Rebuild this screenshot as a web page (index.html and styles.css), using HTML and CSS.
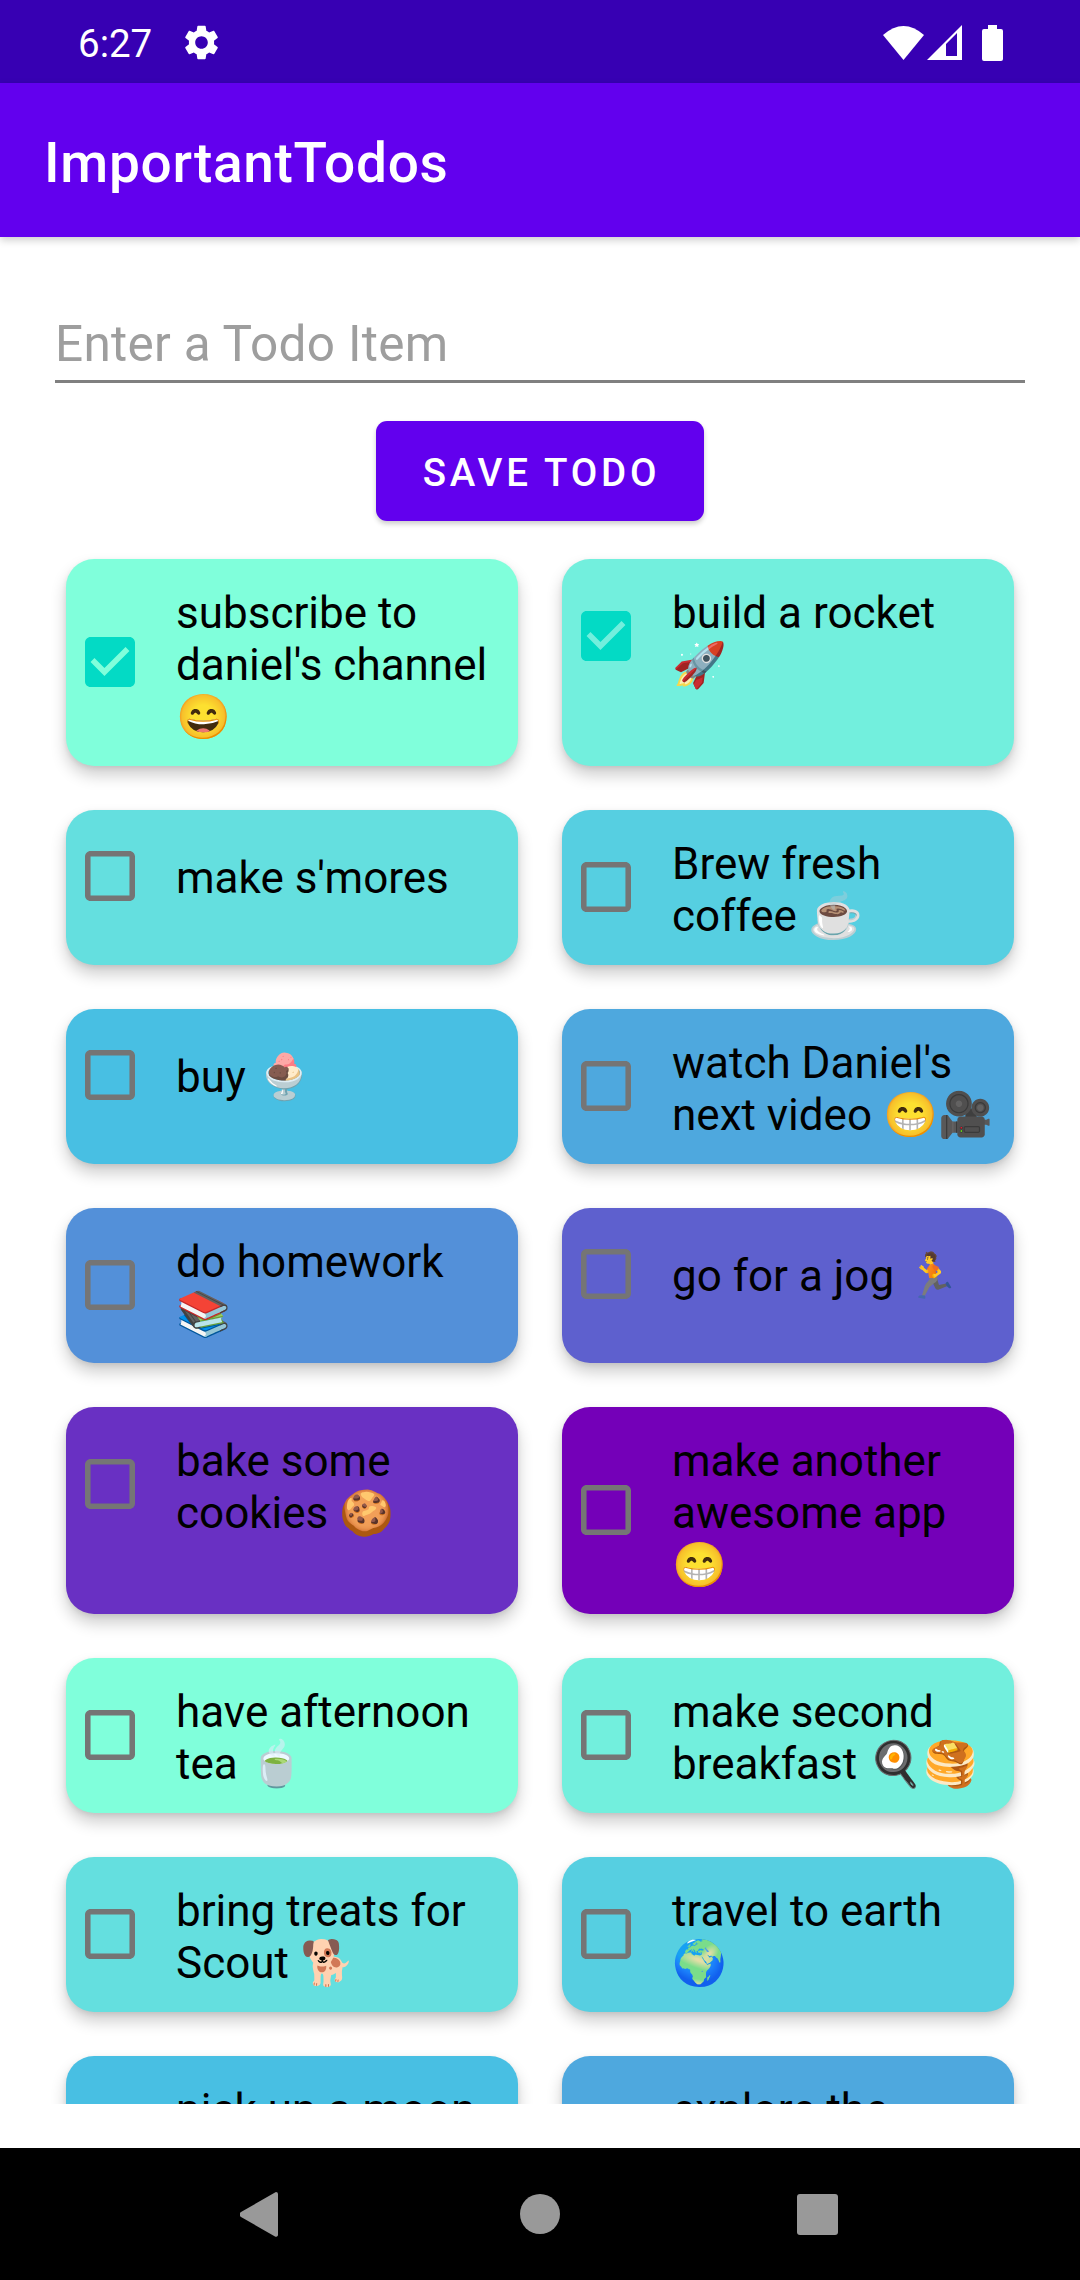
FILE: index.html
```html
<!DOCTYPE html>
<html>
<head>
    <title>ImportantTodos</title>
    <link rel="stylesheet" href="styles.css">
</head>
<body>
    <svg class="sprites">
        <symbol id="box-empty" viewBox="0 0 18 18">
            <path d="M16 0H2C.9 0 0 .9 0 2v14c0 1.1.9 2 2 2h14c1.1 0 2-.9 2-2V2c0-1.1-.9-2-2-2zm0 16H2V2h14v14z"/>
        </symbol>
        <symbol id="box-checked" viewBox="0 0 18 18">
            <path d="M16 0H2C.9 0 0 .9 0 2v14c0 1.1.9 2 2 2h14c1.1 0 2-.9 2-2V2c0-1.1-.9-2-2-2zM7 14 2 9l1.41-1.41L7 11.17l7.59-7.59L16 5l-9 9z"/>
        </symbol>
    </svg>

    <div class="status-bar">
        <span class="clock">6:27</span>
        <svg class="gear" viewBox="2.65 2 18.7 20">
            <path d="M19.14 12.94c.04-.3.06-.61.06-.94 0-.32-.02-.64-.07-.94l2.03-1.58c.18-.14.23-.41.12-.61l-1.92-3.32c-.12-.22-.37-.29-.59-.22l-2.39.96c-.5-.38-1.03-.7-1.62-.94l-.36-2.54c-.04-.24-.24-.41-.48-.41h-3.84c-.24 0-.43.17-.47.41l-.36 2.54c-.59.24-1.13.57-1.62.94l-2.39-.96c-.22-.08-.47 0-.59.22L2.74 8.87c-.12.21-.08.47.12.61l2.03 1.58c-.05.3-.09.63-.09.94s.02.64.07.94l-2.03 1.58c-.18.14-.23.41-.12.61l1.92 3.32c.12.22.37.29.59.22l2.39-.96c.5.38 1.03.7 1.62.94l.36 2.54c.05.24.24.41.48.41h3.84c.24 0 .44-.17.47-.41l.36-2.54c.59-.24 1.13-.56 1.62-.94l2.39.96c.22.08.47 0 .59-.22l1.92-3.32c.12-.22.07-.47-.12-.61l-2.01-1.58zM12 15.6c-1.98 0-3.6-1.62-3.6-3.6s1.62-3.6 3.6-3.6 3.6 1.62 3.6 3.6-1.62 3.6-3.6 3.6z"/>
        </svg>
        <div class="status-icons">
            <svg class="wifi" viewBox="0 0 41 34"><path d="M20.5 34 0 9Q20.5-9 41 9z"/></svg>
            <svg class="signal" viewBox="0 0 35 35"><path fill-rule="evenodd" d="M35 0 0 35h35zM30 8 19 19v12h11z"/></svg>
            <svg class="battery" viewBox="0 0 21 36"><path d="M6 0h9v4h4a2 2 0 0 1 2 2v28a2 2 0 0 1-2 2H2a2 2 0 0 1-2-2V6a2 2 0 0 1 2-2h4z"/></svg>
        </div>
    </div>

    <div class="app-bar">ImportantTodos</div>

    <div class="content">
        <input class="todo-input" type="text" placeholder="Enter a Todo Item">
        <button class="save-button">SAVE TODO</button>

        <div class="todo-list">
            <div class="todo-card">
                <svg class="box box-three is-checked"><use href="#box-checked"/></svg>
                <div class="todo-text">subscribe to daniel's channel 😄</div>
            </div>
            <div class="todo-card">
                <svg class="box box-two is-checked"><use href="#box-checked"/></svg>
                <div class="todo-text">build a rocket 🚀</div>
            </div>
            <div class="todo-card">
                <svg class="box box-one"><use href="#box-empty"/></svg>
                <div class="todo-text one-line">make s'mores</div>
            </div>
            <div class="todo-card">
                <svg class="box box-two"><use href="#box-empty"/></svg>
                <div class="todo-text">Brew fresh coffee ☕</div>
            </div>
            <div class="todo-card">
                <svg class="box box-one"><use href="#box-empty"/></svg>
                <div class="todo-text one-line">buy 🍨</div>
            </div>
            <div class="todo-card">
                <svg class="box box-two"><use href="#box-empty"/></svg>
                <div class="todo-text">watch Daniel's next video 😁🎥</div>
            </div>
            <div class="todo-card">
                <svg class="box box-two"><use href="#box-empty"/></svg>
                <div class="todo-text">do homework 📚</div>
            </div>
            <div class="todo-card">
                <svg class="box box-one"><use href="#box-empty"/></svg>
                <div class="todo-text one-line">go for a jog 🏃</div>
            </div>
            <div class="todo-card">
                <svg class="box box-two"><use href="#box-empty"/></svg>
                <div class="todo-text">bake some cookies 🍪</div>
            </div>
            <div class="todo-card">
                <svg class="box box-three"><use href="#box-empty"/></svg>
                <div class="todo-text">make another awesome app 😁</div>
            </div>
            <div class="todo-card">
                <svg class="box box-two"><use href="#box-empty"/></svg>
                <div class="todo-text">have afternoon tea 🍵</div>
            </div>
            <div class="todo-card">
                <svg class="box box-two"><use href="#box-empty"/></svg>
                <div class="todo-text">make second breakfast 🍳🥞</div>
            </div>
            <div class="todo-card">
                <svg class="box box-two"><use href="#box-empty"/></svg>
                <div class="todo-text">bring treats for Scout 🐕</div>
            </div>
            <div class="todo-card">
                <svg class="box box-two"><use href="#box-empty"/></svg>
                <div class="todo-text">travel to earth 🌍</div>
            </div>
            <div class="todo-card">
                <svg class="box box-two"><use href="#box-empty"/></svg>
                <div class="todo-text">pick up a moon</div>
            </div>
            <div class="todo-card">
                <svg class="box box-two"><use href="#box-empty"/></svg>
                <div class="todo-text">explore the</div>
            </div>
        </div>
    </div>

    <div class="nav-bar">
        <svg class="nav-back" viewBox="0 0 38 45"><path d="M36 0a2 2 0 0 1 2 2v41a2 2 0 0 1-3 1.5L1 25a3 3 0 0 1 0-5L35 .5z"/></svg>
        <svg class="nav-home" viewBox="0 0 40 40"><circle cx="20" cy="20" r="20"/></svg>
        <svg class="nav-recent" viewBox="0 0 41 41"><rect width="41" height="41" rx="3"/></svg>
    </div>
</body>
</html>
```
FILE: styles.css
```css
html, body {
    margin: 0;
    height: 100%;
}
body {
    display: flex;
    flex-direction: column;
    width: 1080px;
    height: 2280px;
    background-color: #fff;
    font-family: Roboto, sans-serif;
    overflow: hidden;
}
.sprites {
    display: none;
}

/* status bar */
.status-bar {
    display: flex;
    align-items: center;
    flex: none;
    box-sizing: border-box;
    height: 83px;
    padding: 2px 77px 0 78px;
    background-color: #3700b3;
    color: #fff;
    fill: #fff;
}
.clock {
    padding-top: 2px;
    font-size: 38.5px;
}
.gear {
    width: 33px;
    height: 35px;
    margin-left: 33px;
}
.status-icons {
    display: flex;
    align-items: center;
    margin-left: auto;
}
.wifi {
    width: 41px;
    height: 34px;
}
.signal {
    width: 35px;
    height: 35px;
    margin-left: 3px;
}
.battery {
    width: 21px;
    height: 36px;
    margin-left: 20px;
}

/* app bar */
.app-bar {
    position: relative;
    z-index: 1;
    flex: none;
    height: 154px;
    padding-left: 44px;
    line-height: 160px;
    background-color: #6200ee;
    color: #fff;
    font-size: 55px;
    font-weight: 500;
    letter-spacing: 0.7px;
    box-shadow: 0 3px 8px rgba(0, 0, 0, 0.2);
}

/* form */
.content {
    display: flex;
    flex-direction: column;
    flex: 1;
    min-height: 0;
    padding-top: 70px;
    padding-bottom: 44px;
}
.todo-input {
    box-sizing: border-box;
    flex: none;
    width: 970px;
    height: 76px;
    margin-left: 55px;
    padding: 0;
    border: none;
    border-bottom: 3px solid #808080;
    outline: none;
    background: none;
    font-family: Roboto, sans-serif;
    font-size: 49.5px;
    letter-spacing: 0.3px;
}
.todo-input::placeholder {
    color: #9e9e9e;
    opacity: 1;
}
.save-button {
    flex: none;
    align-self: center;
    width: 328px;
    height: 100px;
    margin-top: 38px;
    padding: 2px 0 0 3px;
    border: none;
    border-radius: 11px;
    background-color: #6200ee;
    color: #fff;
    font-family: Roboto, sans-serif;
    font-size: 38.5px;
    font-weight: 500;
    letter-spacing: 3.75px;
    box-shadow: 0 3px 5px rgba(0, 0, 0, 0.2);
}

/* todo list */
.todo-list {
    display: grid;
    grid-template-columns: 452px 452px;
    grid-auto-rows: min-content;
    gap: 44px;
    flex: 1;
    min-height: 0;
    padding: 38px 66px 0;
    overflow: hidden;
}
.todo-card {
    display: flex;
    align-items: flex-start;
    box-sizing: border-box;
    min-height: 155px;
    padding: 26px 0 23px 19px;
    border-radius: 28px;
    background-color: var(--card);
    color: #000;
    box-shadow: 0 9px 16px rgba(0, 0, 0, 0.2), 0 2px 5px rgba(0, 0, 0, 0.08);
}
.todo-card:nth-child(10n+1) { --card: #80ffdb; }
.todo-card:nth-child(10n+2) { --card: #72efdd; }
.todo-card:nth-child(10n+3) { --card: #64dfdf; }
.todo-card:nth-child(10n+4) { --card: #56cfe1; }
.todo-card:nth-child(10n+5) { --card: #48bfe3; }
.todo-card:nth-child(10n+6) { --card: #4ea8de; }
.todo-card:nth-child(10n+7) { --card: #5390d9; }
.todo-card:nth-child(10n+8) { --card: #5e60ce; }
.todo-card:nth-child(10n+9) { --card: #6930c3; }
.todo-card:nth-child(10n+10) { --card: #7400b8; }

.box {
    flex: none;
    width: 50px;
    height: 50px;
    fill: #757575;
}
.box.is-checked {
    fill: #03dac5;
}
.box-one {
    margin-top: 15px;
}
.box-two {
    margin-top: 26px;
}
.box-three {
    margin-top: 52px;
}
.todo-text {
    width: 326px;
    margin-top: 2px;
    margin-left: 41px;
    font-size: 44px;
    line-height: 52px;
}
.todo-text.one-line {
    margin-top: 16px;
}

/* navigation bar */
.nav-bar {
    display: flex;
    align-items: center;
    flex: none;
    height: 132px;
    padding-left: 240px;
    background-color: #000;
    fill: #999;
}
.nav-back {
    width: 38px;
    height: 45px;
}
.nav-home {
    width: 40px;
    height: 40px;
    margin-left: 242px;
}
.nav-recent {
    width: 41px;
    height: 41px;
    margin-left: 237px;
}
```
